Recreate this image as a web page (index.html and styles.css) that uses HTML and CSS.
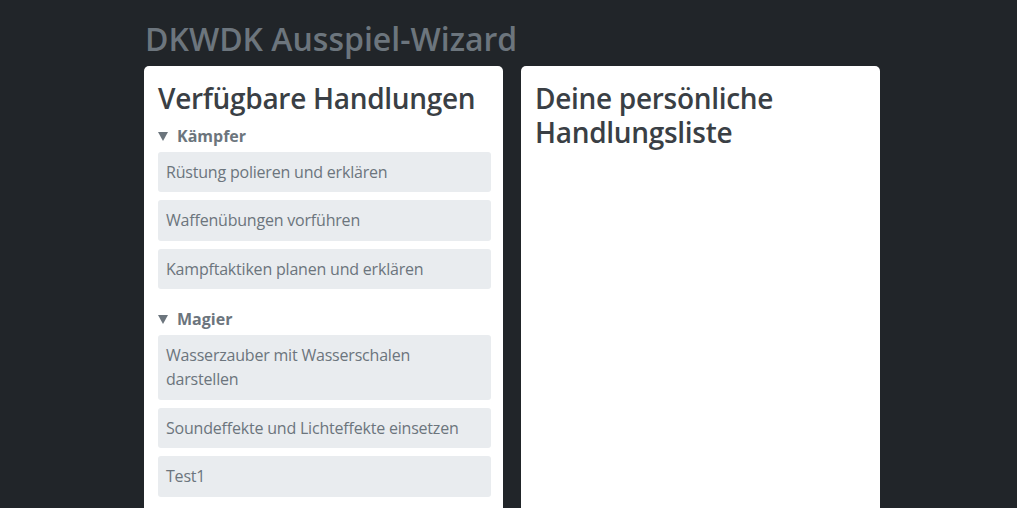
FILE: index.html
```html
<!DOCTYPE html>
<html lang="de">
<head>
<meta charset="utf-8">
<title>DKWDK Ausspiel-Wizard</title>
<link rel="stylesheet" href="styles.css">
</head>
<body>
<div class="page">
  <h1 class="title">DKWDK Ausspiel-Wizard</h1>
  <div class="columns">
    <section class="card">
      <h2 class="card-title">Verfügbare Handlungen</h2>
      <details class="group" open>
        <summary>Kämpfer</summary>
        <div class="item">Rüstung polieren und erklären</div>
        <div class="item">Waffenübungen vorführen</div>
        <div class="item">Kampftaktiken planen und erklären</div>
      </details>
      <details class="group" open>
        <summary>Magier</summary>
        <div class="item">Wasserzauber mit Wasserschalen darstellen</div>
        <div class="item">Soundeffekte und Lichteffekte einsetzen</div>
        <div class="item">Test1</div>
      </details>
    </section>
    <section class="card">
      <h2 class="card-title">Deine persönliche Handlungsliste</h2>
    </section>
  </div>
</div>
</body>
</html>
```
FILE: styles.css
```css
html, body {
  margin: 0;
  padding: 0;
  background: #212529;
  font-family: "Open Sans", "Liberation Sans", sans-serif;
  color: #343a40;
}
.page {
  width: 736px;
  margin-left: 144px;
  padding-top: 18px;
}
.title {
  margin: 0 0 6px 1px;
  font-size: 32px;
  font-weight: 600;
  line-height: 1.3;
  color: #6c757d;
}
.columns {
  display: grid;
  grid-template-columns: 359px 359px;
  column-gap: 18px;
}
.card {
  background: #fff;
  border-radius: 5px;
  padding: 15px 12px 14px 14px;
  min-height: 460px;
}
.card-title {
  margin: 0 0 11px;
  font-size: 28px;
  font-weight: 600;
  line-height: 1.22;
  letter-spacing: -0.3px;
  color: #3a3f45;
}
.group {
  margin-bottom: 20px;
}
.group summary {
  list-style: none;
  display: flex;
  align-items: center;
  font-size: 16px;
  font-weight: 700;
  color: #6c757d;
  line-height: 20px;
  margin-bottom: 6px;
  cursor: pointer;
}
.group summary::-webkit-details-marker {
  display: none;
}
.group summary::before {
  content: "";
  width: 0;
  height: 0;
  border-left: 5px solid transparent;
  border-right: 5px solid transparent;
  border-top: 9px solid #6c757d;
  margin: 1px 9px 0 0;
}
.item {
  background: #e9ecef;
  border-radius: 3px;
  padding: 8px 8px 8.5px;
  margin-bottom: 8px;
  font-size: 16px;
  line-height: 24px;
  letter-spacing: -0.2px;
  color: #6c757d;
}
```
